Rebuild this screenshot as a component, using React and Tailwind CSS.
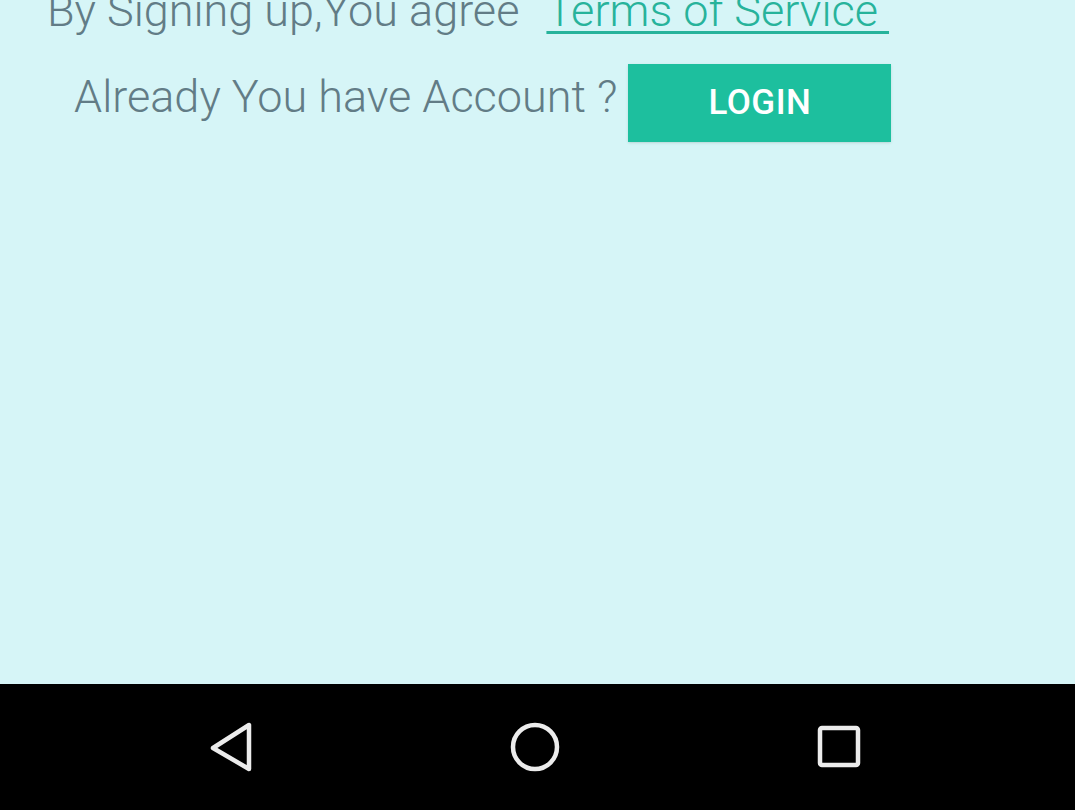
export default function App() {
    return (
        <div className="h-screen w-full flex flex-col overflow-hidden bg-[#d6f5f7]" style={{ fontFamily: 'Roboto, "Noto Sans", sans-serif' }}>
            {/* Content */}
            <div className="flex-1 overflow-hidden">
                {/* Terms line */}
                <div className="mt-[-15px] pl-[47px] text-[45px] leading-[52px] font-light text-[#627c86] whitespace-nowrap">
                    By Signing up,You agree
                    <span className="ml-[27px] text-[#27b39b] underline decoration-[3px] underline-offset-[5px]">
                        Terms of Service&nbsp;
                    </span>
                </div>

                {/* Login row */}
                <div className="mt-[27px] pl-[74px] flex items-start gap-[11px]">
                    <span className="pt-[7px] text-[45px] leading-[52px] font-light text-[#627c86] whitespace-nowrap">
                        Already You have Account ?
                    </span>
                    <button className="w-[263px] h-[78px] bg-[#1dbf9e] text-white text-[35px] font-medium tracking-[0.5px] shadow-sm">
                        LOGIN
                    </button>
                </div>
            </div>

            {/* Navigation bar */}
            <div className="h-[126px] bg-black flex items-center justify-center gap-[200px] pr-[5px]">
                <div className="w-[104px] flex justify-center">
                    <svg width="46" height="52" viewBox="0 0 46 52" fill="none">
                        <path d="M41 4 L41 48 L5 27 Z" stroke="#ececec" strokeWidth="4.5" strokeLinejoin="round" />
                    </svg>
                </div>
                <div className="w-[104px] flex justify-center">
                    <svg width="52" height="52" viewBox="0 0 52 52" fill="none">
                        <circle cx="26" cy="26" r="22" stroke="#ececec" strokeWidth="4.5" />
                    </svg>
                </div>
                <div className="w-[104px] flex justify-center">
                    <svg width="46" height="46" viewBox="0 0 46 46" fill="none">
                        <rect x="4" y="4" width="38" height="37" rx="2" stroke="#ececec" strokeWidth="4.5" />
                    </svg>
                </div>
            </div>
        </div>
    );
}
